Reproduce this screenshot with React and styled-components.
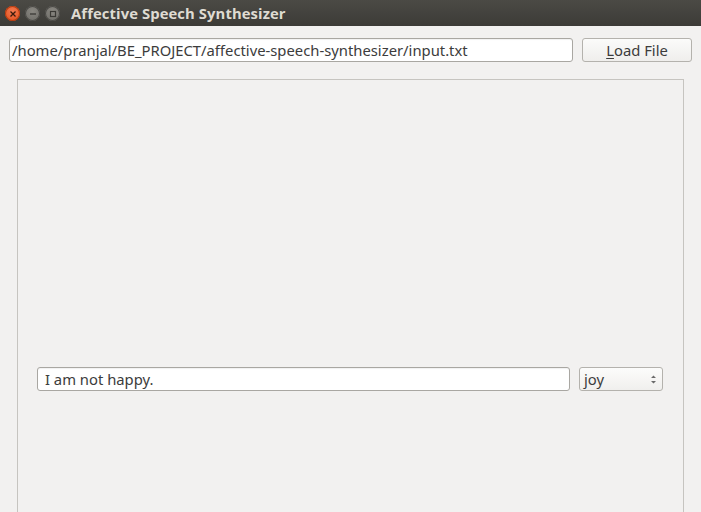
import React, { useState } from 'react';
import styled, { createGlobalStyle } from 'styled-components';

const GlobalStyle = createGlobalStyle`
  html, body {
    margin: 0;
    padding: 0;
    overflow: hidden;
    background: #f2f1f0;
  }
  * { box-sizing: border-box; }
`;

const Window = styled.div`
  width: 701px;
  height: 512px;
  background: #f2f1f0;
  font-family: 'Noto Sans', 'DejaVu Sans', sans-serif;
  color: #3c3c3c;
  display: flex;
  flex-direction: column;
  overflow: hidden;
`;

const TitleBar = styled.div`
  height: 26px;
  flex: none;
  background: linear-gradient(#4b4a45, #3c3b37);
  display: flex;
  align-items: center;
  padding-left: 5px;
`;

const Controls = styled.div`
  display: flex;
  gap: 5px;
  margin-top: 1px;
`;

const CtrlButton = styled.div`
  width: 15px;
  height: 15px;
  border-radius: 50%;
  display: flex;
  align-items: center;
  justify-content: center;
  background: ${p => (p.close
    ? 'radial-gradient(circle at 50% 35%, #f47b52, #df4a16)'
    : 'radial-gradient(circle at 50% 35%, #8a8882, #6a6964)')};
  box-shadow: inset 0 0 0 1px ${p => (p.close ? '#b33c10' : '#4a4945')};
`;

const Title = styled.div`
  margin-left: 11px;
  font-family: 'Open Sans', 'DejaVu Sans', sans-serif;
  font-weight: 700;
  font-size: 14.8px;
  color: #dfdbd2;
  letter-spacing: 0.1px;
`;

const Content = styled.div`
  flex: 1;
  display: flex;
  flex-direction: column;
  padding: 12px 9px 0 9px;
`;

const TopRow = styled.div`
  display: flex;
  gap: 9px;
  height: 24px;
`;

const TextField = styled.input`
  flex: ${p => (p.grow ? 1 : 'none')};
  height: 24px;
  border: 1px solid #a9a7a2;
  border-radius: 3px;
  background: #ffffff;
  font-family: 'Noto Sans', 'DejaVu Sans', sans-serif;
  font-size: 14.8px;
  color: #3c3c3c;
  padding: 0 ${p => p.pad || 2}px;
  outline: none;
  box-shadow: inset 0 1px 1px rgba(0,0,0,0.06);
`;

const Button = styled.button`
  width: 110px;
  height: 24px;
  border: 1px solid #b4b2ad;
  border-radius: 3px;
  background: linear-gradient(#fbfbfa, #efeeec);
  font-family: 'Noto Sans', 'DejaVu Sans', sans-serif;
  font-size: 14.8px;
  color: #3c3c3c;
  padding: 0;
  u { text-decoration-thickness: 1px; text-underline-offset: 2px; }
`;

const Frame = styled.div`
  margin: 17px 8px 0 8px;
  height: 600px;
  flex: none;
  border: 1px solid #c6c4c0;
  padding: 287px 20px 0 19px;
`;

const Row = styled.div`
  display: flex;
  gap: 9px;
  height: 24px;
`;

const Combo = styled.div`
  width: 84px;
  height: 24px;
  border: 1px solid #b4b2ad;
  border-radius: 3px;
  background: linear-gradient(#fcfcfb, #f0efed);
  display: flex;
  align-items: center;
  justify-content: space-between;
  padding: 0 5px 0 4px;
  font-size: 14.8px;
  color: #3c3c3c;
`;

export default function App() {
  const [path, setPath] = useState('/home/pranjal/BE_PROJECT/affective-speech-synthesizer/input.txt');
  const [sentence, setSentence] = useState('I am not happy.');

  return (
    <>
      <GlobalStyle />
      <Window>
        <TitleBar>
          <Controls>
            <CtrlButton close>
              <svg width="8" height="8" viewBox="0 0 8 8">
                <path d="M1.5 1.5 L6.5 6.5 M6.5 1.5 L1.5 6.5" stroke="#3a1a0c" strokeWidth="1.3" />
              </svg>
            </CtrlButton>
            <CtrlButton>
              <svg width="8" height="8" viewBox="0 0 8 8">
                <path d="M1 4 H7" stroke="#3a3935" strokeWidth="1.3" />
              </svg>
            </CtrlButton>
            <CtrlButton>
              <svg width="8" height="8" viewBox="0 0 8 8">
                <rect x="1.5" y="1.5" width="5" height="5" fill="none" stroke="#3a3935" strokeWidth="1.2" />
              </svg>
            </CtrlButton>
          </Controls>
          <Title>Affective Speech Synthesizer</Title>
        </TitleBar>
        <Content>
          <TopRow>
            <TextField grow value={path} onChange={e => setPath(e.target.value)} />
            <Button><u>L</u>oad File</Button>
          </TopRow>
          <Frame>
            <Row>
              <TextField grow pad={7} value={sentence} onChange={e => setSentence(e.target.value)} />
              <Combo>
                <span>joy</span>
                <svg width="7" height="11" viewBox="0 0 7 11">
                  <path d="M1 4 L3.5 1.5 L6 4 Z M1 7 L3.5 9.5 L6 7 Z" fill="#6a6a6a" />
                </svg>
              </Combo>
            </Row>
          </Frame>
        </Content>
      </Window>
    </>
  );
}
